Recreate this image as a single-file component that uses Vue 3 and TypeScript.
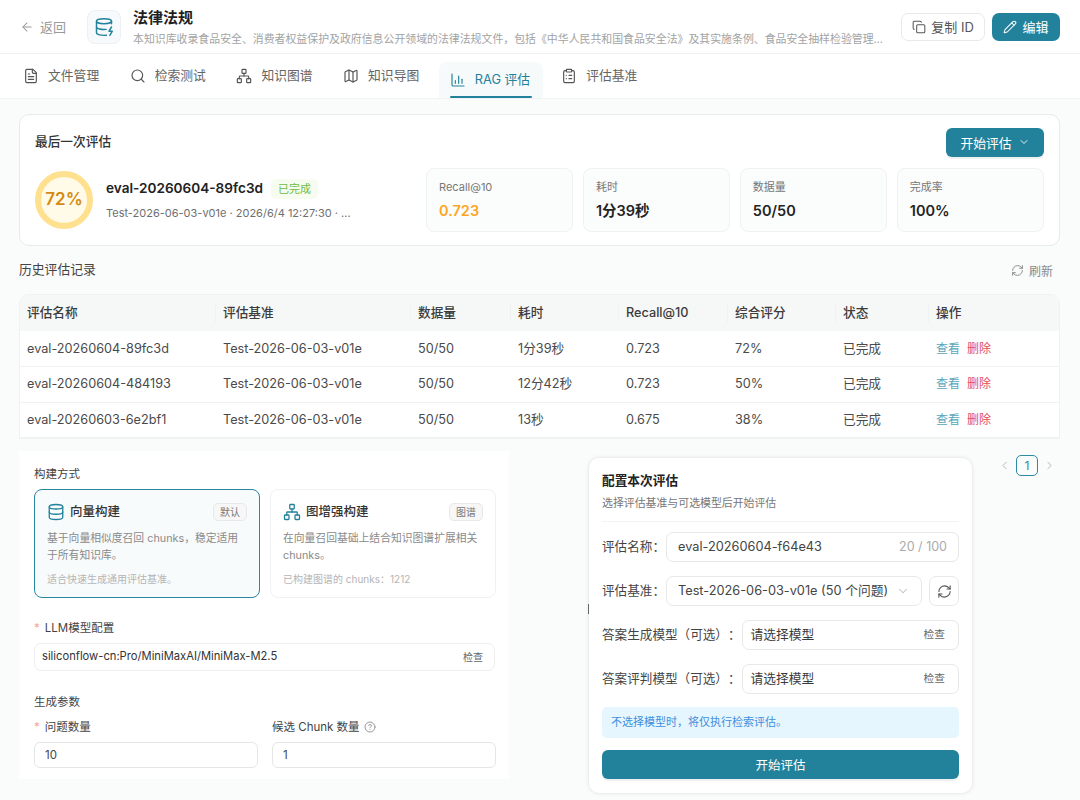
<template>
  <div class="page">
    <!-- 顶部 -->
    <header class="top-bar">
      <button class="back-btn">
        <svg class="icon" width="14" height="14" viewBox="0 0 24 24"><path d="m12 19-7-7 7-7" /><path d="M19 12H5" /></svg>
        <span>返回</span>
      </button>
      <div class="kb-icon">
        <svg class="icon" width="20" height="20" viewBox="0 0 24 24"><ellipse cx="12" cy="5" rx="9" ry="3" /><path d="M3 5V19A9 3 0 0 0 15 21.84" /><path d="M21 5V8" /><path d="M21 12L18 17H22L19 22" /><path d="M3 12A9 3 0 0 0 14.59 14.87" /></svg>
      </div>
      <div class="kb-info">
        <h1>法律法规</h1>
        <p>本知识库收录食品安全、消费者权益保护及政府信息公开领域的法律法规文件，包括《中华人民共和国食品安全法》及其实施条例、食品安全抽样检验管理办法等相关内容</p>
      </div>
      <button class="copy-btn">
        <svg class="icon" width="14" height="14" viewBox="0 0 24 24"><rect width="14" height="14" x="8" y="8" rx="2" ry="2" /><path d="M4 16c-1.1 0-2-.9-2-2V4c0-1.1.9-2 2-2h10c1.1 0 2 .9 2 2" /></svg>
        <span>复制 ID</span>
      </button>
      <button class="edit-btn">
        <svg class="icon" width="14" height="14" viewBox="0 0 24 24"><path d="M21.174 6.812a1 1 0 0 0-3.986-3.987L3.842 16.174a2 2 0 0 0-.5.83l-1.321 4.352a.5.5 0 0 0 .623.622l4.353-1.32a2 2 0 0 0 .83-.497z" /><path d="m15 5 4 4" /></svg>
        <span>编辑</span>
      </button>
    </header>

    <!-- 选项卡 -->
    <nav class="tabs">
      <div v-for="tab in tabs" :key="tab.label" class="tab" :class="{ active: tab.active }">
        <svg class="icon" width="16" height="16" viewBox="0 0 24 24"><path v-for="d in tab.paths" :key="d" :d="d" /></svg>
        <span>{{ tab.label }}</span>
      </div>
    </nav>

    <main class="content">
      <!-- 最后一次评估 -->
      <section class="last-card">
        <div class="last-head">
          <h2>最后一次评估</h2>
          <button class="start-btn">
            <span>开始评估</span>
            <svg class="icon" width="12" height="12" viewBox="0 0 24 24"><path d="m6 9 6 6 6-6" /></svg>
          </button>
        </div>
        <div class="last-body">
          <div class="score-ring"><span>72%</span></div>
          <div class="last-info">
            <div class="last-name">
              <strong>eval-20260604-89fc3d</strong>
              <span class="tag-done">已完成</span>
            </div>
            <p>Test-2026-06-03-v01e · 2026/6/4 12:27:30 · ...</p>
          </div>
          <div class="stats">
            <div v-for="s in stats" :key="s.label" class="stat">
              <div class="stat-label">{{ s.label }}</div>
              <div class="stat-value" :class="{ warn: s.warn }">{{ s.value }}</div>
            </div>
          </div>
        </div>
      </section>

      <!-- 历史记录 -->
      <div class="history-head">
        <h3>历史评估记录</h3>
        <button class="refresh-btn">
          <svg class="icon" width="13" height="13" viewBox="0 0 24 24"><path d="M3 12a9 9 0 0 1 9-9 9.75 9.75 0 0 1 6.74 2.74L21 8" /><path d="M21 3v5h-5" /><path d="M21 12a9 9 0 0 1-9 9 9.75 9.75 0 0 1-6.74-2.74L3 16" /><path d="M8 16H3v5" /></svg>
          <span>刷新</span>
        </button>
      </div>

      <div class="table-wrap">
        <table>
          <thead>
            <tr>
              <th v-for="h in headers" :key="h">{{ h }}</th>
            </tr>
          </thead>
          <tbody>
            <tr v-for="r in rows" :key="r[0]">
              <td v-for="c in r" :key="c">{{ c }}</td>
              <td>已完成</td>
              <td class="ops"><a class="view">查看</a><a class="del">删除</a></td>
            </tr>
          </tbody>
        </table>
      </div>

      <div class="lower">
        <!-- 构建表单 -->
        <section class="build-panel">
          <div class="group-title">构建方式</div>
          <div class="build-modes">
            <div class="mode selected">
              <div class="mode-head">
                <svg class="icon" width="18" height="18" viewBox="0 0 24 24"><ellipse cx="12" cy="5" rx="9" ry="3" /><path d="M3 5V19A9 3 0 0 0 21 19V5" /><path d="M3 12A9 3 0 0 0 21 12" /></svg>
                <strong>向量构建</strong>
                <span class="mode-tag">默认</span>
              </div>
              <p>基于向量相似度召回 chunks，稳定适用于所有知识库。</p>
              <small>适合快速生成通用评估基准。</small>
            </div>
            <div class="mode">
              <div class="mode-head">
                <svg class="icon" width="18" height="18" viewBox="0 0 24 24"><rect x="16" y="16" width="6" height="6" rx="1" /><rect x="2" y="16" width="6" height="6" rx="1" /><rect x="9" y="2" width="6" height="6" rx="1" /><path d="M5 16v-3a1 1 0 0 1 1-1h12a1 1 0 0 1 1 1v3" /><path d="M12 12V8" /></svg>
                <strong>图增强构建</strong>
                <span class="mode-tag">图谱</span>
              </div>
              <p>在向量召回基础上结合知识图谱扩展相关 chunks。</p>
              <small>已构建图谱的 chunks：1212</small>
            </div>
          </div>

          <label class="field-label llm-label"><i>*</i>LLM模型配置</label>
          <div class="model-input">
            <span>siliconflow-cn:Pro/MiniMaxAI/MiniMax-M2.5</span>
            <em>检查</em>
          </div>

          <div class="group-title params-title">生成参数</div>
          <div class="params">
            <div>
              <label class="field-label"><i>*</i>问题数量</label>
              <div class="num-input">10</div>
            </div>
            <div>
              <label class="field-label">
                候选 Chunk 数量
                <svg class="help" width="12" height="12" viewBox="0 0 24 24"><circle cx="12" cy="12" r="10" /><path d="M9.09 9a3 3 0 0 1 5.83 1c0 2-3 3-3 3" /><path d="M12 17h.01" /></svg>
              </label>
              <div class="num-input">1</div>
            </div>
          </div>
        </section>

        <!-- 分页 -->
        <div class="pager">
          <svg class="icon" width="13" height="13" viewBox="0 0 24 24"><path d="m15 18-6-6 6-6" /></svg>
          <span class="page-num">1</span>
          <svg class="icon" width="13" height="13" viewBox="0 0 24 24"><path d="m9 18 6-6-6-6" /></svg>
        </div>

        <!-- 弹窗 -->
        <section class="config-modal">
          <h4>配置本次评估</h4>
          <p class="config-sub">选择评估基准与可选模型后开始评估</p>
          <div class="config-row first">
            <label>评估名称：</label>
            <div class="box grow">
              <span class="val">eval-20260604-f64e43</span>
              <span class="count">20 / 100</span>
            </div>
          </div>
          <div class="config-row">
            <label>评估基准：</label>
            <div class="box grow">
              <span class="val">Test-2026-06-03-v01e (50 个问题)</span>
              <svg class="icon caret" width="14" height="14" viewBox="0 0 24 24"><path d="m6 9 6 6 6-6" /></svg>
            </div>
            <button class="icon-box">
              <svg class="icon" width="15" height="15" viewBox="0 0 24 24"><path d="M3 12a9 9 0 0 1 9-9 9.75 9.75 0 0 1 6.74 2.74L21 8" /><path d="M21 3v5h-5" /><path d="M21 12a9 9 0 0 1-9 9 9.75 9.75 0 0 1-6.74-2.74L3 16" /><path d="M8 16H3v5" /></svg>
            </button>
          </div>
          <div class="config-row">
            <label>答案生成模型（可选）：</label>
            <div class="box grow model">
              <span class="val">请选择模型</span>
              <em>检查</em>
            </div>
          </div>
          <div class="config-row">
            <label>答案评判模型（可选）：</label>
            <div class="box grow model">
              <span class="val">请选择模型</span>
              <em>检查</em>
            </div>
          </div>
          <div class="config-tip">不选择模型时，将仅执行检索评估。</div>
          <button class="config-submit">开始评估</button>
        </section>
      </div>
    </main>
  </div>
</template>

<script setup lang="ts">
const tabs = [
  {
    label: '文件管理',
    paths: [
      'M15 2H6a2 2 0 0 0-2 2v16a2 2 0 0 0 2 2h12a2 2 0 0 0 2-2V7Z',
      'M14 2v4a2 2 0 0 0 2 2h4',
      'M16 13H8',
      'M16 17H8',
      'M10 9H8',
    ],
  },
  { label: '检索测试', paths: ['M19 11a8 8 0 1 1-16 0 8 8 0 0 1 16 0Z', 'm21 21-4.3-4.3'] },
  {
    label: '知识图谱',
    paths: [
      'M17 16h4a1 1 0 0 1 1 1v4a1 1 0 0 1-1 1h-4a1 1 0 0 1-1-1v-4a1 1 0 0 1 1-1Z',
      'M3 16h4a1 1 0 0 1 1 1v4a1 1 0 0 1-1 1H3a1 1 0 0 1-1-1v-4a1 1 0 0 1 1-1Z',
      'M10 2h4a1 1 0 0 1 1 1v4a1 1 0 0 1-1 1h-4a1 1 0 0 1-1-1V3a1 1 0 0 1 1-1Z',
      'M5 16v-3a1 1 0 0 1 1-1h12a1 1 0 0 1 1 1v3',
      'M12 12V8',
    ],
  },
  {
    label: '知识导图',
    paths: [
      'M14.106 5.553a2 2 0 0 0 1.788 0l3.659-1.83A1 1 0 0 1 21 4.619v12.764a1 1 0 0 1-.553.894l-4.553 2.277a2 2 0 0 1-1.788 0l-4.212-2.106a2 2 0 0 0-1.788 0l-3.659 1.83A1 1 0 0 1 3 19.381V6.618a1 1 0 0 1 .553-.894l4.553-2.277a2 2 0 0 1 1.788 0z',
      'M15 5.764v15',
      'M9 3.236v15',
    ],
  },
  {
    label: 'RAG 评估',
    active: true,
    paths: ['M3 3v16a2 2 0 0 0 2 2h16', 'M8 17v-4', 'M13 17V6', 'M18 17v-6'],
  },
  {
    label: '评估基准',
    paths: [
      'M9 2h6a1 1 0 0 1 1 1v2a1 1 0 0 1-1 1H9a1 1 0 0 1-1-1V3a1 1 0 0 1 1-1Z',
      'M16 4h2a2 2 0 0 1 2 2v14a2 2 0 0 1-2 2H6a2 2 0 0 1-2-2V6a2 2 0 0 1 2-2h2',
      'M12 11h4',
      'M12 16h4',
      'M8 11h.01',
      'M8 16h.01',
    ],
  },
]

const stats = [
  { label: 'Recall@10', value: '0.723', warn: true },
  { label: '耗时', value: '1分39秒' },
  { label: '数据量', value: '50/50' },
  { label: '完成率', value: '100%' },
]

const headers = ['评估名称', '评估基准', '数据量', '耗时', 'Recall@10', '综合评分', '状态', '操作']

const rows = [
  ['eval-20260604-89fc3d', 'Test-2026-06-03-v01e', '50/50', '1分39秒', '0.723', '72%'],
  ['eval-20260604-484193', 'Test-2026-06-03-v01e', '50/50', '12分42秒', '0.723', '50%'],
  ['eval-20260603-6e2bf1', 'Test-2026-06-03-v01e', '50/50', '13秒', '0.675', '38%'],
]
</script>

<style>
html,
body {
  margin: 0;
  background: #fafbfb;
}
</style>

<style scoped>
.page {
  width: 1080px;
  height: 800px;
  overflow: hidden;
  background: #fafbfb;
  color: #222;
  font-family: Inter, 'Noto Sans CJK SC', sans-serif;
  font-size: 13px;
  line-height: 1.4;
  text-spacing-trim: space-all;
}

.icon {
  fill: none;
  stroke: currentColor;
  stroke-width: 1.75;
  stroke-linecap: round;
  stroke-linejoin: round;
  flex: none;
}

button {
  font-family: inherit;
  cursor: pointer;
}

.top-bar {
  height: 54px;
  box-sizing: border-box;
  display: flex;
  align-items: center;
  padding: 0 20px;
  background: #fff;
  border-bottom: 1px solid #eeeff0;
}

.back-btn {
  display: flex;
  align-items: center;
  gap: 6px;
  flex: none;
  padding: 0;
  border: none;
  background: none;
  color: #9a9a9a;
  font-size: 13px;
  width: 67px;
}

.kb-icon {
  width: 34px;
  height: 34px;
  flex: none;
  display: flex;
  align-items: center;
  justify-content: center;
  border: 1px solid #edf1f3;
  border-radius: 8px;
  background: #f6fafc;
  color: #23829b;
  margin-right: 12px;
  box-sizing: border-box;
}

.kb-info {
  flex: 1;
  min-width: 0;
  margin-right: 15px;
  padding-top: 2px;
}

.kb-info h1 {
  margin: 0 0 3px;
  font-size: 15px;
  line-height: 20px;
  font-weight: 600;
  color: #1f1f1f;
}

.kb-info p {
  margin: 0;
  font-size: 10.9px;
  line-height: 16px;
  color: #a3a3a3;
  white-space: nowrap;
  overflow: hidden;
  text-overflow: ellipsis;
}

.copy-btn,
.edit-btn {
  height: 28px;
  flex: none;
  display: flex;
  align-items: center;
  gap: 5px;
  border-radius: 7px;
  font-size: 13px;
  box-sizing: border-box;
}

.copy-btn {
  width: 84px;
  justify-content: center;
  padding: 0;
  border: 1px solid #e9e9e9;
  background: #fff;
  color: #555;
  margin-right: 7px;
}

.edit-btn {
  width: 68px;
  justify-content: center;
  padding: 0;
  border: none;
  background: #23829b;
  color: #fff;
}

.tabs {
  height: 45px;
  box-sizing: border-box;
  display: flex;
  padding-left: 12px;
  background: #fff;
  border-bottom: 1px solid #f1f2f2;
}

.tab {
  display: flex;
  align-items: center;
  gap: 9px;
  padding: 0 11px;
  margin-right: 8.5px;
  font-size: 12.8px;
  color: #666;
  box-sizing: border-box;
  height: 44px;
  position: relative;
}

.tab .icon {
  color: #555;
}

.tab.active {
  margin-top: 8px;
  margin-right: 7px;
  height: 36px;
  background: #f6fafb;
  border-radius: 8px 8px 0 0;
  color: #23829b;
  padding: 0 13px 0 11px;
}

.tab.active .icon {
  color: #23829b;
}

.tab.active::after {
  content: '';
  position: absolute;
  left: 11px;
  right: 11px;
  bottom: 0;
  height: 2px;
  border-radius: 2px;
  background: #23829b;
}

.content {
  padding: 15px 20px 0 19px;
}

.last-card {
  height: 132px;
  box-sizing: border-box;
  background: #fff;
  border: 1px solid #e8eaeb;
  border-radius: 10px;
  padding: 12px 15px;
}

.last-head {
  display: flex;
  align-items: center;
  justify-content: space-between;
  height: 30px;
}

.last-head h2 {
  margin: 0;
  font-size: 12.7px;
  font-weight: 500;
  color: #333;
}

.start-btn {
  width: 98px;
  height: 29px;
  display: flex;
  align-items: center;
  justify-content: center;
  gap: 6px;
  padding: 0;
  border: none;
  border-radius: 6px;
  background: #23829b;
  color: #fff;
  font-size: 12.8px;
  box-shadow: 0 2px 0 rgba(0, 0, 0, 0.06);
}

.last-body {
  display: flex;
  align-items: center;
  margin-top: 11px;
}

.score-ring {
  width: 58px;
  height: 58px;
  box-sizing: border-box;
  border: 6px solid #ffe08f;
  border-radius: 50%;
  background: #fffbe8;
  display: flex;
  align-items: center;
  justify-content: center;
  flex: none;
  margin-right: 13px;
}

.score-ring span {
  color: #d48a12;
  font-size: 17px;
  font-weight: 600;
}

.last-info {
  flex: 1;
  min-width: 0;
}

.last-name {
  display: flex;
  align-items: center;
  gap: 8px;
}

.last-name strong {
  font-size: 13.6px;
  font-weight: 600;
  color: #222;
}

.tag-done {
  padding: 0 7px;
  height: 20px;
  line-height: 20px;
  border-radius: 5px;
  font-size: 11px;
  color: #6dbb45;
  background: #f6fdf0;
}

.last-info p {
  margin: 6px 0 0;
  font-size: 11px;
  line-height: 16px;
  color: #6f6f6f;
}

.stats {
  display: flex;
  gap: 9.67px;
  flex: none;
}

.stat {
  width: 147.25px;
  height: 64px;
  box-sizing: border-box;
  padding: 11px 12px;
  background: #fbfcfc;
  border: 1px solid #f0f2f2;
  border-radius: 8px;
}

.stat-label {
  font-size: 11px;
  line-height: 14px;
  color: #777;
}

.stat-value {
  margin-top: 8px;
  font-size: 14.5px;
  line-height: 18px;
  font-weight: 600;
  color: #242424;
}

.stat-value.warn {
  color: #faa61e;
}

.history-head {
  display: flex;
  align-items: center;
  justify-content: space-between;
  height: 48px;
}

.history-head h3 {
  margin: 0;
  font-size: 12.8px;
  font-weight: 400;
  color: #444;
}

.refresh-btn {
  display: flex;
  align-items: center;
  gap: 5px;
  padding: 0 7px 0 0;
  border: none;
  background: none;
  color: #8a8a8a;
  font-size: 12px;
}

.table-wrap {
  background: #fff;
  border: 1px solid #f0f1f1;
  border-radius: 10px 10px 0 0;
  overflow: hidden;
}

table {
  width: 100%;
  border-collapse: collapse;
  table-layout: fixed;
  font-size: 12.7px;
}

th:nth-child(1) { width: 196px; }
th:nth-child(2) { width: 195px; }
th:nth-child(3) { width: 100px; }
th:nth-child(4) { width: 108px; }
th:nth-child(5) { width: 109px; }
th:nth-child(6) { width: 108px; }
th:nth-child(7) { width: 93px; }

th {
  height: 36px;
  box-sizing: border-box;
  padding: 0 7px;
  text-align: left;
  font-weight: 500;
  color: #3c3c3c;
  background: #f6f7f7;
  position: relative;
}

th:not(:last-child)::after {
  content: '';
  position: absolute;
  right: 0;
  top: 9px;
  bottom: 9px;
  width: 1px;
  background: #f0f1f1;
}

td {
  height: 35.5px;
  padding: 0 7px;
  box-sizing: border-box;
  color: #4a4a4a;
  border-bottom: 1px solid #f0f1f1;
  white-space: nowrap;
}

.ops a {
  font-size: 12px;
  margin-right: 7px;
}

.view {
  color: #5aa5bb;
}

.del {
  color: #e34d59;
}

.lower {
  position: relative;
  margin-top: 12px;
  display: flex;
  justify-content: space-between;
  align-items: flex-start;
}

.build-panel {
  width: 490px;
  height: 328px;
  box-sizing: border-box;
  padding: 15px 14px 0 15px;
  background: #fff;
}

.group-title {
  font-size: 11.5px;
  line-height: 16px;
  color: #444;
}

.build-modes {
  display: grid;
  grid-template-columns: 226px 226px;
  gap: 10px;
  margin-top: 7px;
}

.mode {
  height: 109px;
  box-sizing: border-box;
  padding: 12px 12px 0 12px;
  border: 1px solid #f0f1f2;
  border-radius: 8px;
  background: #fff;
}

.mode.selected {
  border-color: #2a87a0;
  background: #f8fbfc;
}

.mode-head {
  display: flex;
  align-items: center;
  gap: 5px;
  height: 20px;
  color: #23829b;
}

.mode-head strong {
  flex: 1;
  font-size: 12.5px;
  font-weight: 500;
  color: #333;
}

.mode-tag {
  height: 18px;
  line-height: 16px;
  box-sizing: border-box;
  padding: 0 6px;
  border: 1px solid #e8e8e8;
  border-radius: 5px;
  background: #f7f7f7;
  font-size: 10px;
  color: #777;
}

.mode p {
  margin: 9px 0 0;
  font-size: 10.8px;
  line-height: 16.5px;
  color: #8a8a8a;
}

.mode small {
  display: block;
  margin-top: 8px;
  font-size: 10px;
  line-height: 14px;
  color: #b5b5b5;
}

.field-label {
  display: flex;
  align-items: center;
  gap: 4px;
  font-size: 11.5px;
  line-height: 16px;
  color: #444;
}

.field-label i {
  color: #f3a5a5;
  font-style: normal;
  margin-right: 1px;
}

.llm-label {
  margin-top: 22px;
}

.model-input {
  margin-top: 7px;
  height: 28px;
  box-sizing: border-box;
  padding: 0 11px 0 7px;
  display: flex;
  align-items: center;
  justify-content: space-between;
  border: 1px solid #eeeeef;
  border-radius: 7px;
  font-size: 11.2px;
  color: #333;
}

.model-input em {
  font-style: normal;
  font-size: 10px;
  color: #666;
}

.model em {
  font-style: normal;
  font-size: 10.7px;
  color: #666;
}

.params-title {
  margin-top: 23px;
}

.params {
  display: grid;
  grid-template-columns: 224px 224px;
  gap: 14px;
  margin-top: 9px;
}

.help {
  fill: none;
  stroke: #999;
  stroke-width: 2;
  stroke-linecap: round;
}

.num-input {
  margin-top: 7px;
  height: 26px;
  line-height: 24px;
  box-sizing: border-box;
  padding: 0 10px;
  border: 1px solid #e6e6e6;
  border-radius: 6px;
  font-size: 11.5px;
  color: #444;
}

.pager {
  margin: 4px 4px 0 0;
  display: flex;
  align-items: center;
  gap: 5px;
  color: #b5b5b5;
}

.page-num {
  width: 22px;
  height: 21px;
  box-sizing: border-box;
  line-height: 19px;
  text-align: center;
  border: 1px solid #2f8aa3;
  border-radius: 5px;
  color: #2f8aa3;
  font-size: 12px;
}

.config-modal {
  position: absolute;
  left: 570px;
  top: 7px;
  width: 383px;
  height: 335px;
  box-sizing: border-box;
  padding: 14px 13px 0 13px;
  background: #fff;
  border-radius: 10px;
  box-shadow: 0 0 4px rgba(0, 0, 0, 0.12);
}

.config-modal::before {
  content: '';
  position: absolute;
  left: -1px;
  top: 146px;
  width: 1px;
  height: 10px;
  background: #666;
}

.config-modal h4 {
  margin: 0;
  font-size: 12.7px;
  line-height: 18px;
  font-weight: 600;
  color: #222;
}

.config-sub {
  margin: 5px 0 0;
  padding-bottom: 10px;
  border-bottom: 1px solid #f2f3f3;
  font-size: 10.9px;
  line-height: 16px;
  color: #777;
}

.config-row {
  display: flex;
  align-items: center;
  margin-top: 14px;
  height: 30px;
}

.config-row.first {
  margin-top: 10px;
}

.config-row label {
  flex: none;
  font-size: 12.6px;
  color: #444;
  margin-right: 1px;
}

.box {
  height: 30px;
  box-sizing: border-box;
  display: flex;
  align-items: center;
  justify-content: space-between;
  padding: 0 11px;
  border: 1px solid #e8e8e8;
  border-radius: 7px;
  min-width: 0;
}

.box.model {
  padding-right: 13px;
}

.grow {
  flex: 1;
}

.val {
  font-size: 12.75px;
  color: #444;
  white-space: nowrap;
}

.model .val {
  margin-left: -3px;
  color: #3a3a3a;
}

.count {
  font-size: 12.5px;
  color: #aaa;
}

.caret {
  color: #c0c0c0;
}

.icon-box {
  width: 30px;
  height: 30px;
  margin-left: 7px;
  padding: 0;
  display: flex;
  align-items: center;
  justify-content: center;
  border: 1px solid #e8e8e8;
  border-radius: 7px;
  background: #fff;
  color: #555;
}

.config-tip {
  margin-top: 13px;
  height: 31px;
  line-height: 31px;
  padding: 0 9px;
  border-radius: 5px;
  background: #e6f6fe;
  color: #3f8fdc;
  font-size: 11px;
}

.config-submit {
  width: 100%;
  height: 29px;
  margin-top: 12px;
  padding: 0;
  border: none;
  border-radius: 6px;
  background: #23829b;
  color: #fff;
  font-size: 12.5px;
  box-shadow: 0 2px 0 rgba(0, 0, 0, 0.06);
}
</style>
